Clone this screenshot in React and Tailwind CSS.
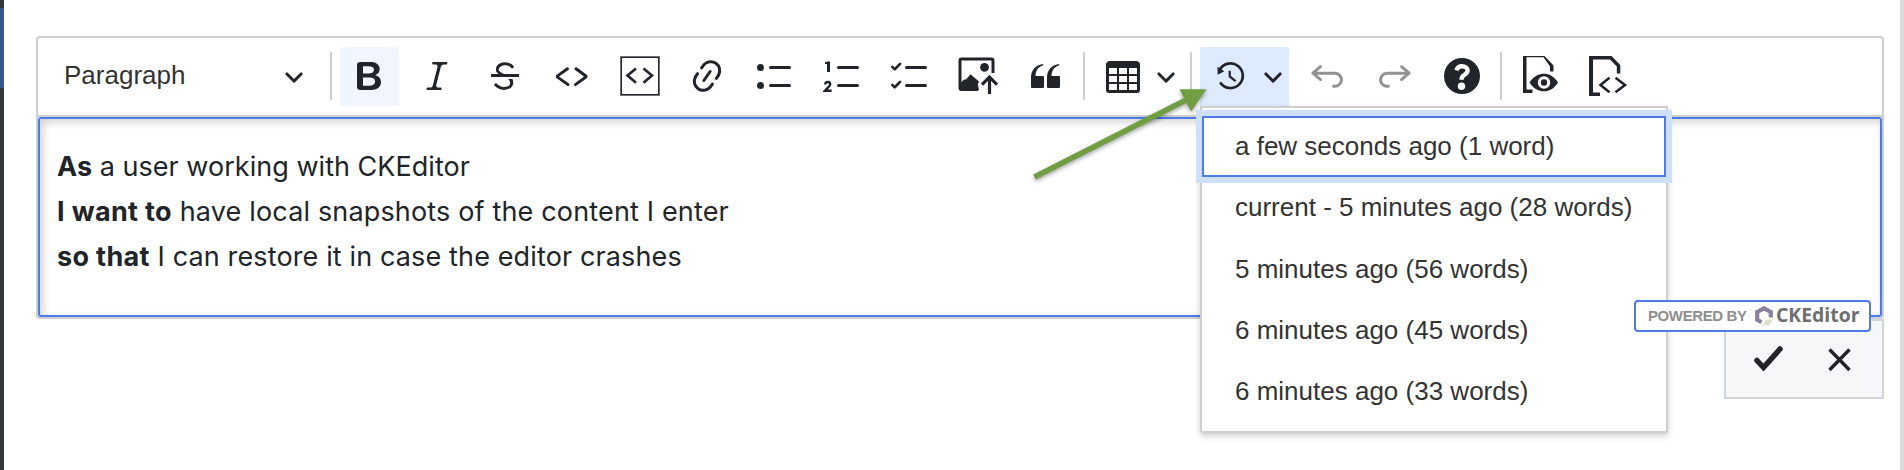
const Icon = ({ children, className = "" }) => (
  <svg viewBox="0 0 20 20" className={`h-10 w-10 shrink-0 fill-current ${className}`}>
    {children}
  </svg>
);

const Px = ({ children, className = "" }) => (
  <svg viewBox="0 0 40 40" className={`h-10 w-10 shrink-0 ${className}`}>
    {children}
  </svg>
);

const Btn = ({ children, className = "" }) => (
  <button className={`flex h-[59px] w-[59px] shrink-0 items-center justify-center rounded-[3px] pb-px ${className}`}>{children}</button>
);

const Sep = ({ className = "" }) => <span className={`-mt-px h-12 w-[2px] shrink-0 bg-[#ccced1] ${className}`} />;

const Chevron = () => (
  <svg viewBox="0 0 10 10" className="h-5 w-5 shrink-0 fill-current">
    <path d="M.941 4.523a.75.75 0 1 1 1.06-1.06l3.006 3.005 3.005-3.005a.75.75 0 1 1 1.06 1.06l-3.549 3.55a.75.75 0 0 1-1.168-.136L.941 4.523z" />
  </svg>
);

const UNDO =
  "m5.042 9.367 2.189 1.837a.75.75 0 0 1-.965 1.149l-3.788-3.18a.747.747 0 0 1-.21-.284.75.75 0 0 1 .17-.945L6.23 4.762a.75.75 0 1 1 .964 1.15L4.863 7.866h8.917A.75.75 0 0 1 14 7.9a4 4 0 1 1-1.477 7.718l.344-1.489a2.5 2.5 0 1 0 1.094-4.73l.008-.032H5.042z";

const LINES =
  "M7 5.75c0 .414.336.75.75.75h9.5a.75.75 0 1 0 0-1.5h-9.5a.75.75 0 0 0-.75.75zM7 14.75c0 .414.336.75.75.75h9.5a.75.75 0 1 0 0-1.5h-9.5a.75.75 0 0 0-.75.75z";

const TICK =
  "m2.315 14.705 2.224-2.240a.689.689 0 0 1 .963 0 .664.664 0 0 1 0 .949L2.865 16.070a.682.682 0 0 1-.112.089.647.647 0 0 1-.852-.051L.688 14.886a.635.635 0 0 1 0-.903.647.647 0 0 1 .910 0l.717.722z";

const Toolbar = () => (
  <div className="flex h-[79px] items-center gap-[8.6px] pb-[2px] text-[#212529]">
    <button className="flex h-[59px] w-[283px] items-center justify-between pb-px pl-[26px] pr-[17px] text-[26px] text-[#333]">
      <span className="-mt-[2px]">Paragraph</span>
      <span className="text-[#212529]"><Chevron /></span>
    </button>
    <Sep />
    <Btn className="-ml-[0.6px] bg-[#f0f5ff]">
      <Icon>
        <path d="M10.187 17H5.773c-.637 0-1.092-.138-1.364-.415-.273-.277-.409-.718-.409-1.323V4.738c0-.617.14-1.062.419-1.332.279-.27.73-.406 1.354-.406h4.68c.69 0 1.288.041 1.793.124.506.083.96.242 1.36.478.341.197.644.447.906.75a3.262 3.262 0 0 1 .808 2.162c0 1.401-.722 2.426-2.167 3.075C15.05 10.175 16 11.315 16 13.01a3.756 3.756 0 0 1-2.296 3.504 6.1 6.1 0 0 1-1.517.377c-.571.073-1.238.11-2 .11zm-.217-6.217H7v4.087h3.069c1.977 0 2.965-.69 2.965-2.072 0-.707-.256-1.22-.768-1.537-.512-.319-1.277-.478-2.296-.478zM7 5.13v3.619h2.606c.729 0 1.292-.067 1.69-.2a1.6 1.6 0 0 0 .91-.765c.165-.267.247-.566.247-.897 0-.707-.26-1.176-.778-1.409-.519-.232-1.31-.348-2.375-.348H7z" />
      </Icon>
    </Btn>
    <Btn>
      <Icon>
        <path d="m9.586 14.633.021.004c-.036.335.095.655.393.962.082.083.173.15.274.201h1.474a.6.6 0 1 1 0 1.2H5.304a.6.6 0 0 1 0-1.2h1.15c.474-.07.809-.182 1.005-.334.157-.122.291-.32.404-.597l2.416-9.55a1.053 1.053 0 0 0-.281-.823 1.12 1.12 0 0 0-.442-.296H8.15a.6.6 0 0 1 0-1.2h6.443a.6.6 0 1 1 0 1.2h-1.195c-.376.056-.65.155-.823.296-.215.175-.423.439-.623.79l-2.366 9.347z" />
      </Icon>
    </Btn>
    <Btn className="pl-px">
      <Icon>
        <path d="M7 16.4c-.8-.4-1.5-.9-2.2-1.5a.6.6 0 0 1-.2-.5l.3-.6h1c1 1.2 2.1 1.7 3.7 1.7 1 0 1.8-.3 2.3-.6.6-.4.6-1.2.6-1.3.2-1.2-.9-2.1-.9-2.1h2.1c.3.7.4 1.2.4 1.7v.8l-.6 1.2c-.6.8-1.1 1-1.6 1.2a6 6 0 0 1-2.4.6c-1 0-1.8-.3-2.5-.6zM6.8 9L6 8.3c-.4-.5-.5-.8-.5-1.6 0-.7.1-1.3.5-1.8.4-.6 1-1 1.6-1.3a6.3 6.3 0 0 1 4.7 0 4 4 0 0 1 1.7 1l.3.7c0 .1.2.4-.2.7-.4.2-.9.1-1 0a3 3 0 0 0-1.2-1c-.4-.2-1-.3-2-.4-.7 0-1.4.2-2 .6-.8.6-1 .8-1 1.5 0 .8.5 1 1.2 1.5.6.4 1.1.7 1.9 1H6.8z" />
        <path d="M3 10.5V9h14v1.5z" />
      </Icon>
    </Btn>
    <Btn>
      <Icon>
        <path d="m12.5 5.7 5.2 3.9v1.3l-5.6 4c-.1.2-.3.2-.5.2-.3-.1-.6-.7-.6-1l.3-.4 4.7-3.5L11.5 7l-.2-.2c-.1-.3-.1-.6 0-.8.2-.2.5-.4.8-.4a.8.8 0 0 1 .4.1zm-5.2 0L2 9.6v1.3l5.6 4c.1.2.3.2.5.2.3-.1.7-.7.6-1 0-.1 0-.3-.2-.4l-5-3.5L8.2 7l.2-.2c.1-.3.1-.6 0-.8-.2-.2-.5-.4-.8-.4a.8.8 0 0 0-.3.1z" />
      </Icon>
    </Btn>
    <Btn className="pl-[2px]">
      <Px>
        <rect x="0.5" y="0.500" width="39" height="39" fill="none" stroke="#6f7275" />
        <rect x="1.500" y="1.500" width="37" height="37" fill="none" stroke="#212529" />
        <path d="M16 12.500 7.500 19.600 16 26.800M23.500 12.500 32 19.600 23.500 26.800" fill="none" stroke="#212529" strokeWidth="2.600" />
      </Px>
    </Btn>
    <Btn>
      <Icon>
        <path d="m11.077 15 .991-1.416a.75.75 0 1 1 1.229.86l-1.148 1.64a.748.748 0 0 1-.217.206 5.251 5.251 0 0 1-8.503-5.955.741.741 0 0 1 .12-.274l1.147-1.639a.75.75 0 1 1 1.228.86L4.933 10.7l.006.003a3.75 3.75 0 0 0 6.132 4.294l.006.004zm5.494-5.335a.748.748 0 0 1-.12.274l-1.147 1.639a.75.75 0 1 1-1.228-.86l.86-1.23a3.75 3.75 0 0 0-6.144-4.301l-.86 1.229a.75.75 0 0 1-1.229-.86l1.148-1.64a.748.748 0 0 1 .217-.206 5.251 5.251 0 0 1 8.503 5.955zm-4.563-2.532a.75.75 0 0 1 .184 1.045l-3.155 4.505a.75.75 0 1 1-1.229-.86l3.155-4.506a.75.75 0 0 1 1.045-.184z" />
      </Icon>
    </Btn>
    <Btn>
      <Icon>
        <path d={LINES} />
        <circle cx="2.750" cy="5.750" r="1.750" />
        <circle cx="2.750" cy="14.750" r="1.750" />
      </Icon>
    </Btn>
    <Btn className="pl-px">
      <Icon>
        <path d={LINES} />
        <path d="M3.500 2.700v5.300H2V4H1V3.100l1.300-.4z" />
        <path d="M1.100 14.300c0-.9.550-1.300 1.250-1.300.8 0 1.250.45 1.250 1.100 0 .9-1.100 1.600-2.600 3.250h3.300" fill="none" stroke="currentColor" strokeWidth="1.200" />
      </Icon>
    </Btn>
    <Btn>
      <Icon>
        <path d={LINES} transform="translate(.5 0)" />
        <path d={TICK} />
        <path transform="translate(0 -9)" d={TICK} />
      </Icon>
    </Btn>
    <Btn className="pl-[2px]">
      <Px>
        <path d="M35 17V4.500a1.500 1.500 0 0 0-1.500-1.500H3.500A1.500 1.500 0 0 0 2 4.500V32a1.500 1.500 0 0 0 1.500 1.500H20" fill="none" stroke="#212529" strokeWidth="3" />
        <path d="M2 27.500 6 23.500 8 23.500 12.500 18.300 21 25.500 19.800 28.500 21 34H3z" fill="#212529" />
        <circle cx="26.500" cy="11.300" r="4.400" fill="#212529" />
        <path d="M31.500 38V22M24 28.700 31.500 21 39 28.700" fill="none" stroke="#212529" strokeWidth="3.200" />
      </Px>
    </Btn>
    <Btn>
      <Icon>
        <path d="M3 10.423a6.500 6.500 0 0 1 6.056-6.408l.038.670C6.448 5.423 5.354 7.663 5.220 10H9c.552 0 .5.432.5.986v4.511c0 .554-.448.503-1 .503h-5c-.552 0-.5-.449-.5-1.003v-4.574zm8 0a6.500 6.500 0 0 1 6.056-6.408l.038.670c-2.646.739-3.740 2.979-3.873 5.315H17c.552 0 .5.432.5.986v4.511c0 .554-.448.503-1 .503h-5c-.552 0-.5-.449-.5-1.003v-4.574z" />
      </Icon>
    </Btn>
    <Sep />
    <button className="-ml-[0.5px] flex h-[59px] w-[88.500px] shrink-0 items-center pb-px pl-[9.500px]">
      <Icon>
        <path d="M3 6v3h4V6H3zm0 4v3h4v-3H3zm0 4v3h4v-3H3zm5 3h4v-3H8v3zm5 0h4v-3h-4v3zm4-4v-3h-4v3h4zm0-4V6h-4v3h4zm1.500 8a1.500 1.500 0 0 1-1.500 1.500H3A1.500 1.500 0 0 1 1.500 17V4c.222-.863 1.068-1.500 2-1.500h13c.932 0 1.778.637 2 1.500v13zM12 13v-3H8v3h4zm0-4V6H8v3h4z" />
      </Icon>
      <span className="ml-[13px]"><Chevron /></span>
    </button>
    <Sep className="-ml-[0.8px]" />
    <button className="-ml-[0.4px] flex h-[59px] w-[89px] shrink-0 items-center rounded-t-[3px] bg-[#deeafe] pb-px pl-[10.500px]">
      <Px>
        <path d="M10.800 27.300A12.300 12.300 0 1 0 9.900 13.500" fill="none" stroke="#212529" strokeWidth="2.700" strokeLinecap="round" />
        <path d="M7.500 10.800 7.700 18.800 14.300 15.200z" fill="#212529" />
        <path d="M19.700 14.800V20.400L25.600 25.200" fill="none" stroke="#212529" strokeWidth="2.200" />
      </Px>
      <span className="ml-[13px]"><Chevron /></span>
    </button>
    <Btn className="-ml-[0.5px] pl-[2px] text-[#909294]"><Icon><path d={UNDO} /></Icon></Btn>
    <Btn className="pl-[2px] text-[#909294]"><Icon className="-scale-x-100"><path d={UNDO} /></Icon></Btn>
    <Btn>
      <Px>
        <circle cx="20" cy="20" r="18" fill="#212529" />
        <path d="M14.500 14.300C15.500 10.800 18 10.300 20 10.300c3.300 0 5.600 1.700 5.600 4.300 0 2.400-1.600 3.500-3.500 4.600-1.900 1.100-2.600 1.900-2.600 4.500" fill="none" stroke="#fff" strokeWidth="4.400" />
        <circle cx="19.500" cy="30.200" r="3.700" fill="#fff" />
      </Px>
    </Btn>
    <Sep />
    <Btn className="-ml-[0.3px] pl-[2px]">
      <Px>
        <path d="M3 0H24.500L33.500 9.500V15.500H30V10.500L23.500 1.200H6.500V33.500H12.500V37H3z" fill="#212529" />
        <path d="M9.500 26.500C13.500 20 19 17.700 24 17.700S34 20 38 26.500C34 33 29 35.300 24 35.300S13.500 33 9.500 26.500z" fill="#212529" />
        <circle cx="24" cy="26.500" r="6.200" fill="#fff" />
        <circle cx="24" cy="26.500" r="3.200" fill="#212529" />
      </Px>
    </Btn>
    <Btn className="pl-[2px]">
      <Px className="ml-px">
        <path d="M1 0H23.500L32.300 9V17.500H28.800V10.500L22 3.500H5V36.500H12V40H1z" fill="#212529" />
        <path d="M21.500 21.700 12.500 29 21.500 36.300M27.500 21.700 37 29 27.500 36.300" fill="none" stroke="#212529" strokeWidth="2.600" />
      </Px>
    </Btn>
  </div>
);

const revisions = [
  "a few seconds ago (1 word)",
  "current - 5 minutes ago (28 words)",
  "5 minutes ago (56 words)",
  "6 minutes ago (45 words)",
  "6 minutes ago (33 words)",
];

export default function App() {
  return (
    <div className="relative flex h-[470px] w-full overflow-hidden bg-white font-['Liberation_Sans',Arial,sans-serif]">
      <div className="flex w-1 shrink-0 flex-col bg-[#333638]">
        <div className="mt-2 h-20 bg-[#325a8c]" />
      </div>
      <main className="flex min-w-0 grow flex-col items-end pl-8 pr-4 pt-9">
        <div className="h-[283px] w-full rounded-[4px] border-2 border-[#ccced1]">
          <Toolbar />
          <div className="-mt-[2px] border-t-2 border-[#ccced1]">
            <div className="h-[200px] rounded-[3px] border-2 border-[#4f7be8] pl-[17px] pt-[25px] font-[Inter,'Open_Sans',sans-serif] text-[27px] leading-[45px] text-[#212529] shadow-[inset_3px_3px_8px_rgba(0,0,0,0.18)]">
              <p className="whitespace-nowrap tracking-[0.03px]"><b>As</b> a user working with CKEditor</p>
              <p className="whitespace-nowrap tracking-[0.16px]"><b className="tracking-[0.350px]">I want to</b> have local snapshots of the content I enter</p>
              <p className="whitespace-nowrap tracking-[0.13px]"><b className="tracking-[0.350px]">so that</b> I can restore it in case the editor crashes</p>
            </div>
          </div>
        </div>
        <div className="flex h-20 w-40 border-2 border-[#d1d6dc] bg-[#f6f7f9]">
          <svg viewBox="0 0 156 76" className="h-[76px] w-[156px]" fill="none" stroke="#212529">
            <path d="M31 39.500 37.500 46.500 54 28" strokeWidth="5.500" strokeLinecap="round" />
            <path d="M103.500 28.500 123.500 49M123.500 28.500 103.500 49" strokeWidth="3.400" />
          </svg>
        </div>
      </main>
      <div className="w-1 shrink-0 bg-[#dcdcdd]" />

      <ul className="absolute left-[1200px] top-[106px] w-[468px] rounded-b-[3px] border-2 border-[#ccced1] bg-white pb-[8.500px] pt-2 text-[26px] text-[#333] shadow-[0_3px_6px_rgba(0,0,0,0.2)]">
        {revisions.map((label, i) => (
          <li
            key={label}
            className={`flex h-[61.300px] items-center whitespace-nowrap border-2 pl-[31px] ${i === 0 ? "border-[#4f7be8] shadow-[0_0_0_6px_#cddffa]" : "border-transparent"}`}
          >
            {label}
          </li>
        ))}
      </ul>

      <div className="absolute left-[1634px] top-[300px] flex h-8 w-[237px] items-center rounded-[4px] border-2 border-[#4f7be8] bg-white pl-3">
        <span className="w-[107px] whitespace-nowrap pt-px text-[15px] font-bold tracking-[-0.4px] text-[#8e8e8e]">POWERED BY</span>
        <svg viewBox="0 0 18 20" className="h-5 w-[18px] shrink-0">
          <path d="M15.800 11.500V6L9 2.300 2.200 6V13.800L6.500 16.300" fill="none" stroke="#8b809f" strokeWidth="4.200" />
          <path d="M7.500 19.500 10.500 14.300 18 13 14.500 19.500z" fill="#dfe2cf" />
        </svg>
        <span className="ml-[3px] -mt-[3px] whitespace-nowrap font-['Open_Sans',sans-serif] text-[19.400px] font-bold text-[#6f6f6f]">CKEditor</span>
      </div>

      <svg viewBox="0 0 190 110" className="absolute left-[1024px] top-[80px] h-[110px] w-[190px] drop-shadow-[0_2px_2px_rgba(0,0,0,0.35)]">
        <path d="M10.500 97 165 18.500" stroke="#719e45" strokeWidth="5.500" />
        <path d="M155.500 9.300H182.500L167 31.500z" fill="#719e45" />
      </svg>
    </div>
  );
}
